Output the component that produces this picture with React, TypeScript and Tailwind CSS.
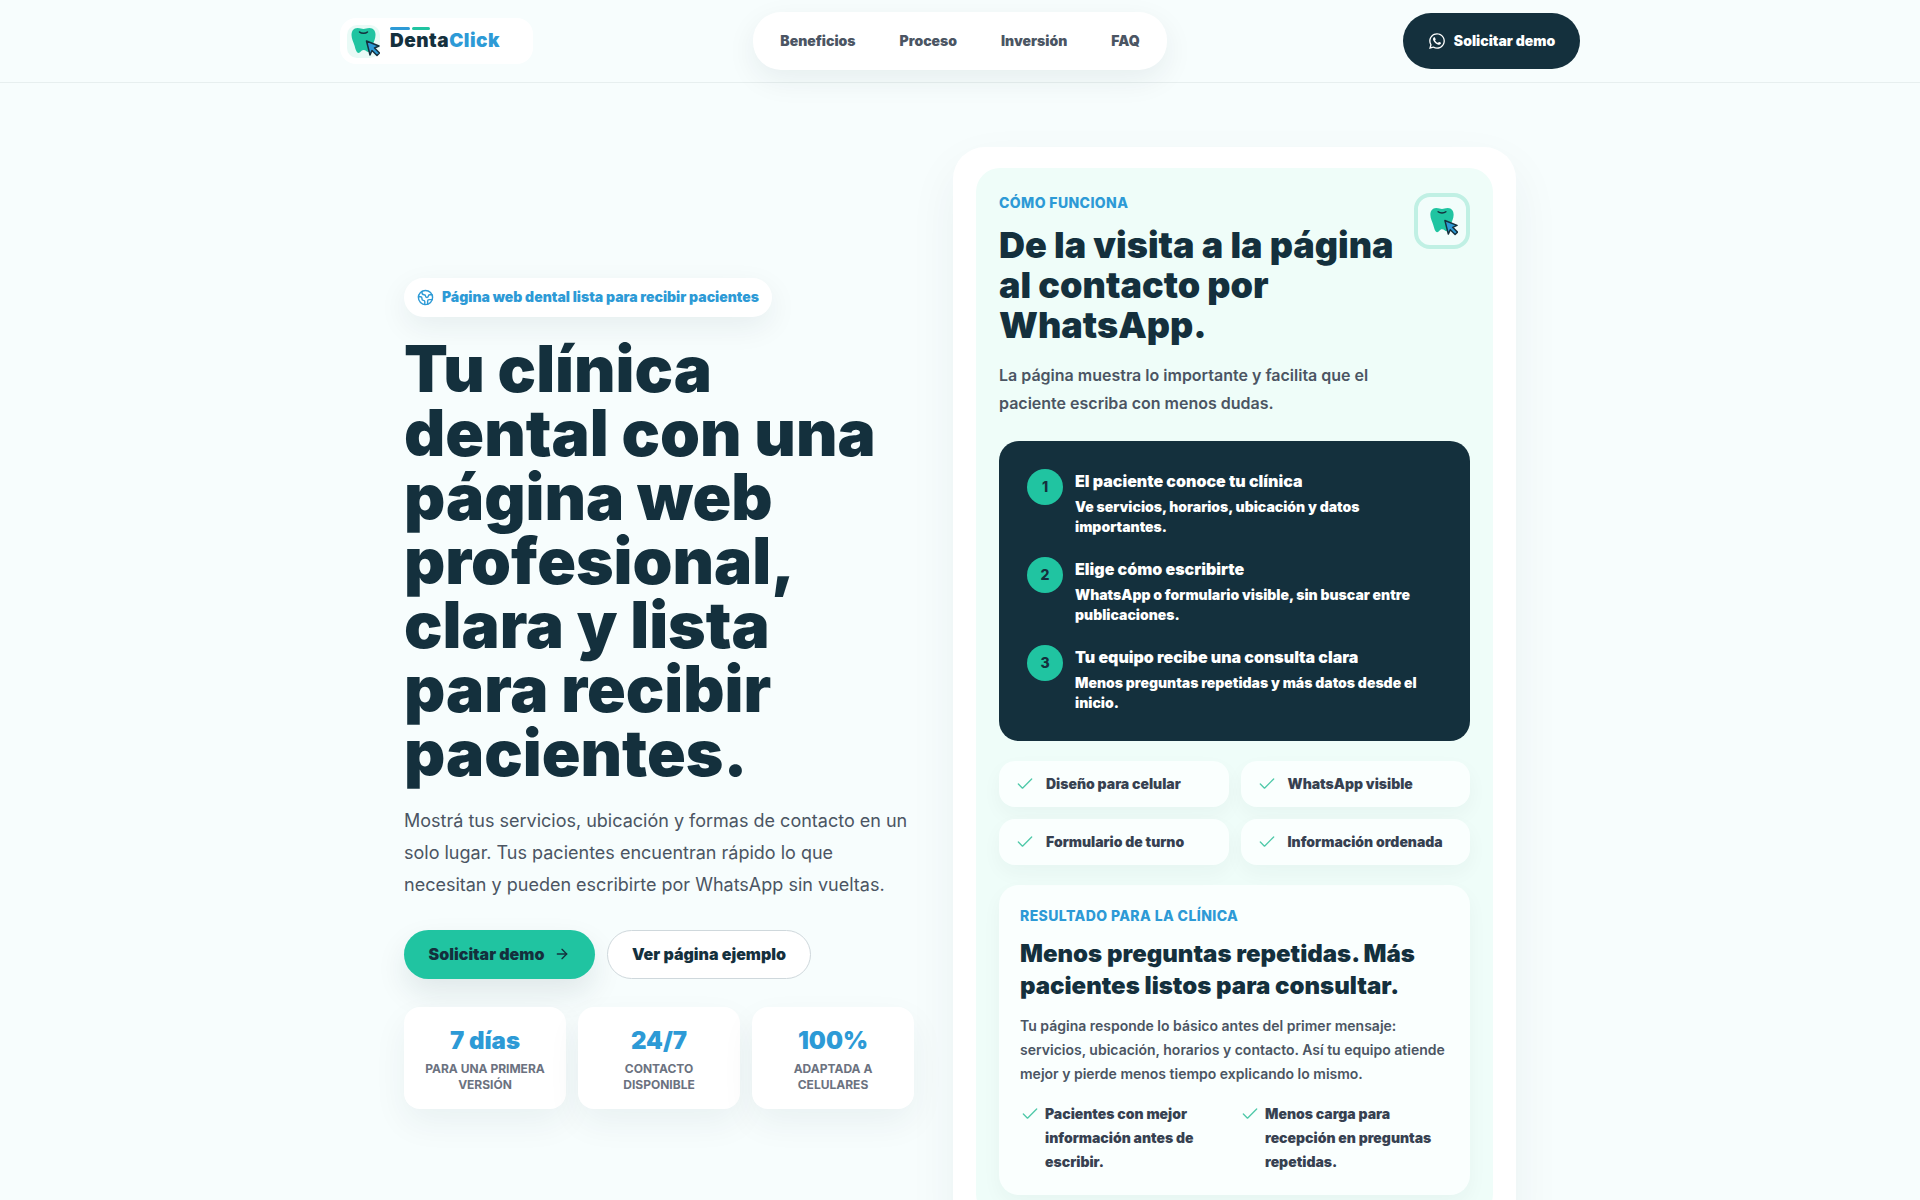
import { ArrowRight, Check, Earth } from 'lucide-react';
import { FaWhatsapp } from 'react-icons/fa';

const steps = [
  { n: 1, title: 'El paciente conoce tu clínica', text: 'Ve servicios, horarios, ubicación y datos importantes.' },
  { n: 2, title: 'Elige cómo escribirte', text: 'WhatsApp o formulario visible, sin buscar entre publicaciones.' },
  { n: 3, title: 'Tu equipo recibe una consulta clara', text: 'Menos preguntas repetidas y más datos desde el inicio.' },
];

const stats = [
  { value: '7 días', label: 'Para una primera versión' },
  { value: '24/7', label: 'Contacto disponible' },
  { value: '100%', label: 'Adaptada a celulares' },
];

const chips = ['Diseño para celular', 'WhatsApp visible', 'Formulario de turno', 'Información ordenada'];

const results = ['Pacientes con mejor información antes de escribir.', 'Menos carga para recepción en preguntas repetidas.'];

// tooth + cursor logo
const ToothMark = ({ className }: { className: string }) => (
  <svg viewBox="-3 0 33 33" className={className}>
    <path
      d="M7.500 3C10.500 3 11.500 4 13.500 4C15.500 4 16.500 3 19.500 3C23.500 3 25.500 6 25.500 10C25.500 14 23.500 17 22.500 20.500C21.800 23.500 20.500 27 18.500 27C16.500 27 16 25 13.500 25C11 25 10.500 28 8.500 28C6.500 28 5.500 24 4.500 20.500C3.500 17 1.500 14 1.500 10C1.500 6 3.500 3 7.500 3Z"
      fill="#20c4a1"
    />
    <path d="M9.500 7c2 1.800 6 1.800 8 0" fill="none" stroke="#14303d" strokeWidth="1.500" strokeLinecap="round" />
    <path
      d="M16.500 16L29 21L24.500 23L29.500 28L27 30.500L22 25.500L20 30Z"
      fill="#2d9ad6"
      stroke="#14303d"
      strokeWidth="1.500"
      strokeLinejoin="round"
    />
  </svg>
);

export default function App() {
  return (
    <div className="min-h-screen bg-[#f7fdfd] font-['Inter',sans-serif] text-[#14303d]">
      {/* Header */}
      <header className="h-[83px] border-b border-[#e7efef]">
        <div className="mx-auto grid h-full w-[1240px] grid-cols-[1fr_auto_1fr] items-center">
          <div className="flex h-[46px] w-[193px] items-center gap-[10px] rounded-2xl bg-white pl-[7px]">
            <div className="flex size-[33px] items-center justify-center rounded-[10px] bg-[#e9faf6]">
              <ToothMark className="size-[33px]" />
            </div>
            <div className="relative -mt-[2px] text-[19px] leading-none font-black tracking-[0.5px]">
              <span className="absolute -top-[4px] left-0 h-[3px] w-5 rounded-full bg-[#2d9ad6]" />
              <span className="absolute -top-[4px] left-[22px] h-[3px] w-[18px] rounded-full bg-[#20c4a1]" />
              Denta<span className="text-[#2d9ad6]">Click</span>
            </div>
          </div>
          <nav className="flex h-[58px] items-center gap-[44px] rounded-[28px] bg-white px-[27px] text-sm font-black text-[#4b5563] shadow-[0_10px_30px_rgba(20,48,61,0.07)]">
            <a>Beneficios</a>
            <a>Proceso</a>
            <a>Inversión</a>
            <a>FAQ</a>
          </nav>
          <a className="flex h-[56px] w-[177px] items-center justify-center gap-2 justify-self-end rounded-full bg-[#14303d] text-sm font-black text-white">
            <FaWhatsapp className="size-[18px]" />
            Solicitar demo
          </a>
        </div>
      </header>

      <main className="mx-auto grid w-[1112px] grid-cols-[510px_563px] items-center justify-between pt-16">
        {/* Hero */}
        <section>
          <div className="flex h-[39px] w-fit items-center gap-2 rounded-full bg-white px-[13px] text-sm font-black text-[#2d9ad6] shadow-[0_10px_30px_rgba(20,48,61,0.07)]">
            <Earth className="size-[17px]" strokeWidth={2} />
            Página web dental lista para recibir pacientes
          </div>
          <h1 className="mt-5 text-[64px] leading-[64px] font-black">
            Tu clínica dental con una página web profesional, clara y lista para recibir pacientes.
          </h1>
          <p className="mt-5 text-[18px] leading-8 text-[#4b5563]">
            Mostrá tus servicios, ubicación y formas de contacto en un solo lugar. Tus pacientes encuentran rápido lo que necesitan y pueden escribirte por WhatsApp sin vueltas.
          </p>
          <div className="mt-[29px] flex gap-3">
            <a className="flex h-[49px] w-[191px] items-center justify-center gap-[10px] rounded-full bg-[#20c4a1] text-base font-black shadow-[0_14px_30px_rgba(20,48,61,0.1)]">
              Solicitar demo
              <ArrowRight className="size-[16px]" strokeWidth={2} />
            </a>
            <a className="flex h-[49px] w-[204px] items-center justify-center rounded-full border border-[#cfd8dc] bg-white text-base font-black">
              Ver página ejemplo
            </a>
          </div>
          <div className="mt-7 grid grid-cols-3 gap-3">
            {stats.map((s) => (
              <div key={s.value} className="h-[102px] rounded-2xl bg-white px-4 pt-[18px] text-center shadow-[0_14px_34px_rgba(20,48,61,0.06)]">
                <div className="text-2xl leading-8 font-black text-[#2d9ad6]">{s.value}</div>
                <div className="mt-1 text-xs leading-4 font-bold text-[#6b7280] uppercase">{s.label}</div>
              </div>
            ))}
          </div>
        </section>

        {/* How it works */}
        <section className="rounded-[32px] bg-white px-[23px] py-[21px] shadow-[0_20px_50px_rgba(20,48,61,0.06)]">
          <div className="rounded-3xl bg-[#effdf9] p-[23px]">
            <div className="flex items-start justify-between gap-4">
              <div>
                <div className="mt-[2px] text-sm leading-5 font-extrabold tracking-[0.4px] text-[#2d9ad6] uppercase">Cómo funciona</div>
                <h2 className="mt-3 text-[36px] leading-10 font-black">De la visita a la página al contacto por WhatsApp.</h2>
                <p className="mt-4 text-base leading-7 font-semibold text-[#4b5563]">
                  La página muestra lo importante y facilita que el paciente escriba con menos dudas.
                </p>
              </div>
              <div className="mt-[2px] flex size-14 shrink-0 items-center justify-center rounded-2xl border-4 border-[#c0f0e4] bg-[#f2fdfb]">
                <ToothMark className="size-8" />
              </div>
            </div>

            <div className="mt-6 flex flex-col gap-5 rounded-[20px] bg-[#14303d] p-7 text-white">
              {steps.map((step) => (
                <div key={step.n} className="flex gap-3">
                  <div className="flex size-9 shrink-0 items-center justify-center rounded-full bg-[#20c4a1] text-sm font-extrabold text-[#14303d]">
                    {step.n}
                  </div>
                  <div className="pt-[2px]">
                    <div className="text-base leading-5 font-black">{step.title}</div>
                    <div className="mt-[6px] text-sm leading-5 font-black">{step.text}</div>
                  </div>
                </div>
              ))}
            </div>

            <div className="mt-5 grid grid-cols-2 gap-3">
              {chips.map((chip) => (
                <div key={chip} className="flex h-[46px] items-center gap-[11px] rounded-2xl bg-[#fafffe] pl-4 text-sm font-black text-[#374151] shadow-[0_8px_20px_rgba(20,48,61,0.04)]">
                  <Check className="size-5 text-[#4fc9a9]" strokeWidth={1.6} />
                  {chip}
                </div>
              ))}
            </div>

            <div className="mt-5 rounded-[20px] bg-[#fafffe] p-[21px] shadow-[0_8px_20px_rgba(20,48,61,0.04)]">
              <div className="text-sm leading-5 font-extrabold tracking-[0.4px] text-[#2d9ad6] uppercase">Resultado para la clínica</div>
              <h3 className="mt-[12px] text-2xl leading-8 font-black">Menos preguntas repetidas. Más pacientes listos para consultar.</h3>
              <p className="mt-3 text-sm leading-6 font-semibold text-[#4b5563]">
                Tu página responde lo básico antes del primer mensaje: servicios, ubicación, horarios y contacto. Así tu equipo atiende mejor y pierde menos tiempo explicando lo mismo.
              </p>
              <div className="mt-4 grid grid-cols-[220px_1fr]">
                {results.map((r) => (
                  <div key={r} className="flex gap-[5px] pr-4 text-sm leading-6 font-black text-[#374151]">
                    <Check className="mt-[2px] size-5 shrink-0 text-[#4fc9a9]" strokeWidth={1.6} />
                    <span>{r}</span>
                  </div>
                ))}
              </div>
            </div>
          </div>
        </section>
      </main>
    </div>
  );
}
